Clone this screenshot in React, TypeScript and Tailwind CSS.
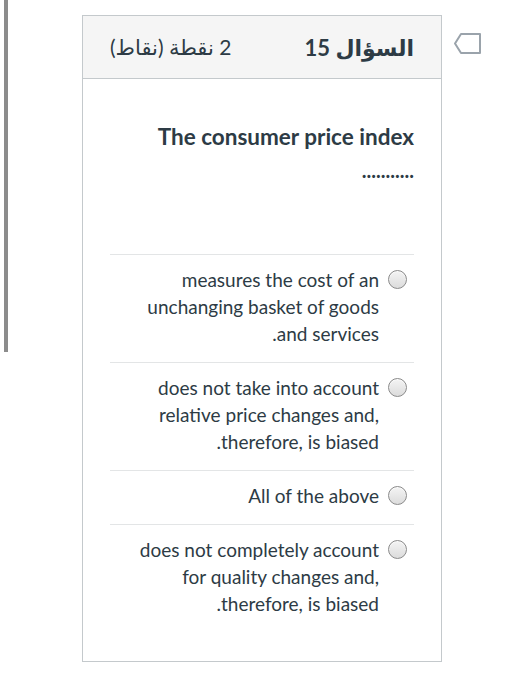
import React from "react";

function Radio() {
  return (
    <span className="mt-[4px] inline-block h-[19px] w-[19px] shrink-0 rounded-full border border-[#8a8a8a] bg-gradient-to-b from-[#f4f4f4] to-[#dcdcdc] shadow-[inset_0_1px_1px_rgba(255,255,255,0.8)]" />
  );
}

function Option({ text }: { text: string }) {
  return (
    <div className="flex items-start gap-[9px] border-t border-[#e3e5e6] pr-[7px] pt-[11px] pb-[15px]">
      <Radio />
      <p className="max-w-[250px] text-[19px] leading-[27px] text-[#2d3b45]">{text}</p>
    </div>
  );
}

export default function App() {
  const options = [
    "measures the cost of an unchanging basket of goods and services.",
    "does not take into account relative price changes and, therefore, is biased.",
    "All of the above",
    "does not completely account for quality changes and, therefore, is biased.",
  ];
  return (
    <div
      className="flex min-h-[700px] w-[524px] items-start bg-white"
      style={{ fontFamily: 'Lato, "DejaVu Sans", sans-serif' }}
    >
      <div className="ml-[4px] h-[352px] w-[4px] shrink-0 bg-[#8c8c8c]" />
      <div dir="rtl" className="ml-[74px] mt-[15px] w-[360px] shrink-0 border border-[#c4c9cc] bg-white">
        <div className="flex h-[63px] items-center justify-between border-b border-[#c4c9cc] bg-[#f5f5f5] px-[27px] text-[#2d3b45]">
          <h2 className="text-[22px] font-bold">السؤال 15</h2>
          <span className="text-[21px]">2 نقطة (نقاط)</span>
        </div>
        <div className="px-[27px] pb-[29px]">
          <div className="pt-[43px] pb-[74px] text-[#2d3b45]">
            <p className="text-[22.5px] font-bold leading-[30px]">The consumer price index</p>
            <p className="mt-[8px] text-[20px] font-bold leading-[20px]" dir="ltr" style={{ textAlign: "right" }}>...........</p>
          </div>
          {options.map((o, i) => (
            <Option key={i} text={o} />
          ))}
        </div>
      </div>
      <svg className="ml-[11px] mt-[32px] shrink-0" width="30" height="24" viewBox="0 0 30 24">
        <path d="M8 2 H27 V21 H8 L2 11.5 Z" fill="none" stroke="#9aa3ab" strokeWidth="2" strokeLinejoin="round" />
      </svg>
    </div>
  );
}
